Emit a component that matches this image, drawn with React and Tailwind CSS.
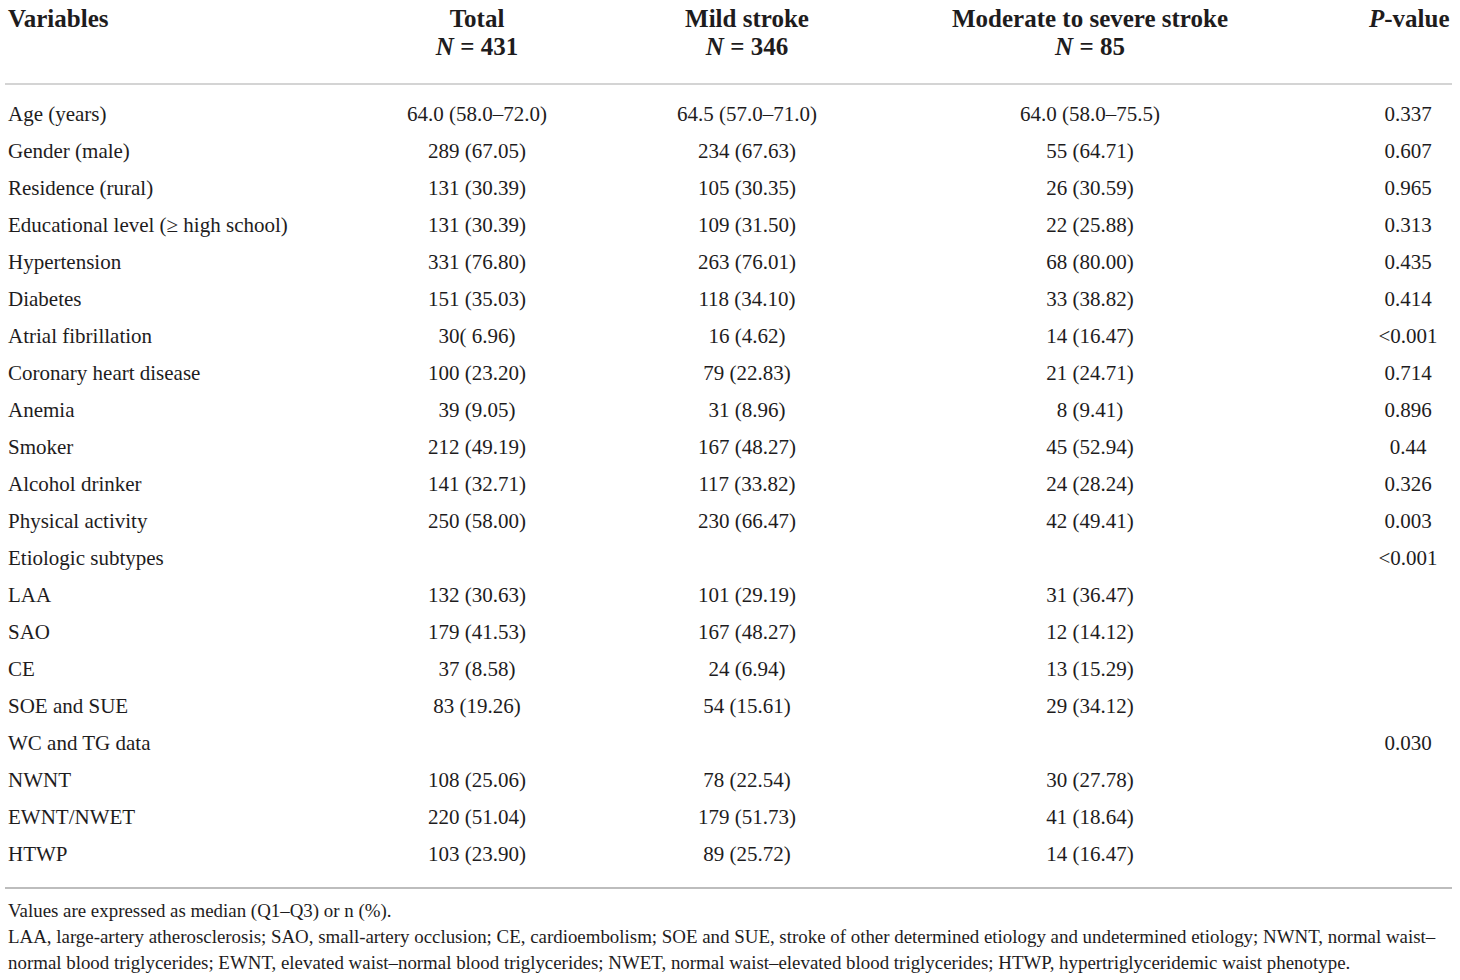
import React from "react";

// Baseline characteristics by stroke severity
const rows = [
  ["Age (years)", "64.0 (58.0–72.0)", "64.5 (57.0–71.0)", "64.0 (58.0–75.5)", "0.337"],
  ["Gender (male)", "289 (67.05)", "234 (67.63)", "55 (64.71)", "0.607"],
  ["Residence (rural)", "131 (30.39)", "105 (30.35)", "26 (30.59)", "0.965"],
  ["Educational level (≥ high school)", "131 (30.39)", "109 (31.50)", "22 (25.88)", "0.313"],
  ["Hypertension", "331 (76.80)", "263 (76.01)", "68 (80.00)", "0.435"],
  ["Diabetes", "151 (35.03)", "118 (34.10)", "33 (38.82)", "0.414"],
  ["Atrial fibrillation", "30( 6.96)", "16 (4.62)", "14 (16.47)", "<0.001"],
  ["Coronary heart disease", "100 (23.20)", "79 (22.83)", "21 (24.71)", "0.714"],
  ["Anemia", "39 (9.05)", "31 (8.96)", "8 (9.41)", "0.896"],
  ["Smoker", "212 (49.19)", "167 (48.27)", "45 (52.94)", "0.44"],
  ["Alcohol drinker", "141 (32.71)", "117 (33.82)", "24 (28.24)", "0.326"],
  ["Physical activity", "250 (58.00)", "230 (66.47)", "42 (49.41)", "0.003"],
  ["Etiologic subtypes", "", "", "", "<0.001"],
  ["LAA", "132 (30.63)", "101 (29.19)", "31 (36.47)", ""],
  ["SAO", "179 (41.53)", "167 (48.27)", "12 (14.12)", ""],
  ["CE", "37 (8.58)", "24 (6.94)", "13 (15.29)", ""],
  ["SOE and SUE", "83 (19.26)", "54 (15.61)", "29 (34.12)", ""],
  ["WC and TG data", "", "", "", "0.030"],
  ["NWNT", "108 (25.06)", "78 (22.54)", "30 (27.78)", ""],
  ["EWNT/NWET", "220 (51.04)", "179 (51.73)", "41 (18.64)", ""],
  ["HTWP", "103 (23.90)", "89 (25.72)", "14 (16.47)", ""],
];

const gridCols = "grid grid-cols-[372px_200px_340px_346px_186px]";

const HeadCell = ({ title, n }) => (
  <div className="text-center leading-[28px] whitespace-nowrap">
    <div>{title}</div>
    <div>
      <i>N</i> = {n}
    </div>
  </div>
);

export default function App() {
  return (
    <div
      className="w-[1460px] h-[980px] bg-white text-[#1e1c1d] overflow-hidden"
      style={{ fontFamily: '"Liberation Serif", "Times New Roman", serif' }}
    >
      <div className="pl-[5px] w-[1452px]">
        {/* header */}
        <div className={`${gridCols} font-bold text-[25px] pt-[5px] pb-[22px] border-b-2 border-[#d4d4d4]`}>
          <div className="pl-[3px] leading-[28px]">Variables</div>
          <HeadCell title="Total" n="431" />
          <HeadCell title="Mild stroke" n="346" />
          <HeadCell title="Moderate to severe stroke" n="85" />
          <div className="pl-[106px] text-center leading-[28px] whitespace-nowrap">
            <i>P</i>-value
          </div>
        </div>

        {/* body */}
        <div className="pt-[11px] pb-[14px] border-b-2 border-[#bdbdbd] text-[21px]">
          {rows.map((r) => (
            <div key={r[0]} className={`${gridCols} h-[37px] items-center whitespace-nowrap`}>
              <div className="pl-[3px]">{r[0]}</div>
              <div className="text-center">{r[1]}</div>
              <div className="text-center">{r[2]}</div>
              <div className="text-center">{r[3]}</div>
              <div className="pl-[104px] text-center">{r[4]}</div>
            </div>
          ))}
        </div>

        {/* footnote */}
        <div className="pl-[3px] pt-[9px] text-[18.9px] leading-[26px] whitespace-nowrap">
          <div>Values are expressed as median (Q1–Q3) or n (%).</div>
          <div>
            LAA, large-artery atherosclerosis; SAO, small-artery occlusion; CE, cardioembolism; SOE and SUE, stroke of
            other determined etiology and undetermined etiology; NWNT, normal waist–
          </div>
          <div>
            normal blood triglycerides; EWNT, elevated waist–normal blood triglycerides; NWET, normal waist–elevated
            blood triglycerides; HTWP, hypertriglyceridemic waist phenotype.
          </div>
        </div>
      </div>
    </div>
  );
}
